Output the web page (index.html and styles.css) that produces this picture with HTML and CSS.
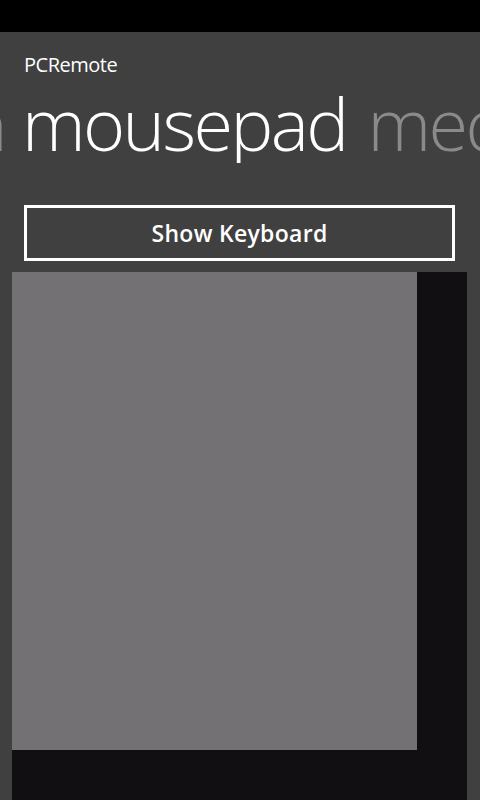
FILE: index.html
```html
<!DOCTYPE html>
<html>
<head>
<meta charset="utf-8">
<link rel="stylesheet" href="styles.css">
</head>
<body>
<div class="status"></div>
<div class="app">
  <div class="app-title">PCRemote</div>
  <div class="pivot">
    <span class="pivot-item prev"><span class="prev-text">main</span></span>
    <span class="pivot-item active">mousepad</span>
    <span class="pivot-item next">media</span>
  </div>
  <div class="content">
    <button class="btn">Show Keyboard</button>
    <div class="pad-frame">
      <div class="pad"></div>
    </div>
  </div>
</div>
</body>
</html>
```
FILE: styles.css
```css
html, body {
  margin: 0;
  padding: 0;
  width: 480px;
  height: 800px;
  overflow: hidden;
  background: #404040;
  font-family: "Open Sans", "DejaVu Sans", sans-serif;
  color: #ffffff;
}
.status {
  height: 32px;
  background: #000000;
}
.app {
  display: flex;
  flex-direction: column;
  height: 768px;
}
.app-title {
  font-size: 20px;
  line-height: 24px;
  margin: 21px 0 0 24px;
  letter-spacing: -0.5px;
}
.pivot {
  display: flex;
  white-space: nowrap;
  overflow: hidden;
  font-size: 72px;
  font-weight: 300;
  line-height: 80px;
  height: 80px;
  margin-top: 6px;
  letter-spacing: -2.6px;
}
.pivot-item {
  flex: none;
}
.pivot-item.prev {
  width: 4px;
  padding-right: 18px;
  overflow: hidden;
  display: flex;
  justify-content: flex-end;
  color: #8a8a8a;
}
.prev-text {
  flex: none;
  margin-right: -1px;
}
.pivot-item.active {
  color: #ffffff;
}
.pivot-item.next {
  color: #8a8a8a;
  margin-left: 21px;
}
.content {
  display: flex;
  flex-direction: column;
  flex: 1;
  padding: 0 13px 0 12px;
}
.btn {
  margin: 42px 12px 0 12px;
  height: 56px;
  border: 3px solid #ffffff;
  background: transparent;
  color: #ffffff;
  font-family: "Open Sans", "DejaVu Sans", sans-serif;
  font-weight: 600;
  font-size: 23px;
  letter-spacing: 0.3px;
  padding: 0;
}
.pad-frame {
  margin-top: 11px;
  flex: 1;
  background: #120f12;
  display: flex;
  flex-direction: column;
  align-items: flex-start;
}
.pad {
  width: 405px;
  height: 478px;
  background: #737174;
}
```
